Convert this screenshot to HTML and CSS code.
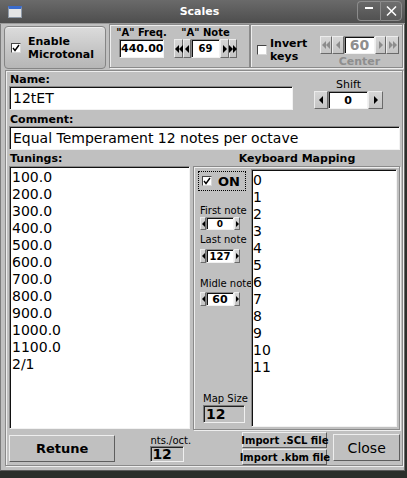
FILE: index.html
```html
<!DOCTYPE html>
<html lang="en">
<head>
<meta charset="utf-8">
<title>Scales</title>
<link rel="stylesheet" href="styles.css">
</head>
<body>
<div class="win">
  <header class="titlebar">
    <div class="tb-left"><span class="appicon"></span></div>
    <div class="title">Scales</div>
    <div class="tb-right">
      <span class="wbtn wmin"><span class="minline"></span></span>
      <span class="wbtn wclose"><svg width="11" height="10" viewBox="0 0 11 10"><path d="M1 0.5 L10 9.5 M10 0.5 L1 9.5" stroke="#fff" stroke-width="1.5" fill="none"/></svg></span>
    </div>
  </header>
  <div class="client">
    <div class="toprow">
      <div class="microbtn">
        <span class="cb"><svg width="8" height="8" viewBox="0 0 8 8"><path d="M1 4 L3 6.5 L7 1" stroke="#000" stroke-width="1.4" fill="none"/></svg></span>
        <span class="mlabel">Enable<br>Microtonal</span>
      </div>
      <div class="grp g1">
        <div class="fcol freq">
          <div class="glabel">"A" Freq.</div>
          <div class="inp freqinp">440.000</div>
        </div>
        <div class="fcol note">
          <div class="glabel">"A" Note</div>
          <div class="counter c-note">
            <span class="cbtn b9"><i class="tl"></i><i class="tl"></i></span>
            <span class="cbtn b8"><i class="tl"></i></span>
            <span class="cval v-note">69</span>
            <span class="cbtn b9"><i class="tr"></i></span>
            <span class="cbtn b8"><i class="tr"></i><i class="tr"></i></span>
          </div>
        </div>
      </div>
      <div class="grp g2">
        <span class="cb cb-inv"></span>
        <div class="invlbl">Invert<br>keys</div>
        <div class="centercol">
          <div class="counter c-center disabled">
            <span class="cbtn b12"><i class="tl"></i><i class="tl"></i></span>
            <span class="cbtn b12"><i class="tl"></i></span>
            <span class="cval v-center">60</span>
            <span class="cbtn b11"><i class="tr"></i></span>
            <span class="cbtn b13"><i class="tr"></i><i class="tr"></i></span>
          </div>
          <div class="centerlbl">Center</div>
        </div>
      </div>
    </div>

    <div class="main">
      <div class="row1">
        <div class="namecol">
          <div class="lbl">Name:</div>
          <div class="inp textinp">12tET</div>
        </div>
        <div class="shiftcol">
          <div class="shiftlbl">Shift</div>
          <div class="counter c-shift">
            <span class="cbtn b14"><i class="tl"></i></span>
            <span class="cval v-shift">0</span>
            <span class="cbtn b15"><i class="tr"></i></span>
          </div>
        </div>
      </div>
      <div class="lbl commentlbl">Comment:</div>
      <div class="inp textinp">Equal Temperament 12 notes per octave</div>

      <div class="labels">
        <div class="lbl tunlbl">Tunings:</div>
        <div class="lbl kmlbl">Keyboard Mapping</div>
      </div>

      <div class="content">
        <div class="inp list tunings">100.0<br>200.0<br>300.0<br>400.0<br>500.0<br>600.0<br>700.0<br>800.0<br>900.0<br>1000.0<br>1100.0<br>2/1</div>
        <div class="grp kmap">
          <div class="kleft">
            <div class="onbox">
              <span class="cb"><svg width="8" height="8" viewBox="0 0 8 8"><path d="M1 4 L3 6.5 L7 1" stroke="#000" stroke-width="1.4" fill="none"/></svg></span>
              <span class="ontext">ON</span>
            </div>
            <div class="smlbl fn">First note</div>
            <div class="counter sm c-first">
              <span class="cbtn b6"><i class="tl"></i></span>
              <span class="cval v-first">0</span>
              <span class="cbtn b6"><i class="tr"></i></span>
            </div>
            <div class="smlbl ln">Last note</div>
            <div class="counter sm c-last">
              <span class="cbtn b6"><i class="tl"></i></span>
              <span class="cval v-last">127</span>
              <span class="cbtn b6"><i class="tr"></i></span>
            </div>
            <div class="smlbl mn">Midle note</div>
            <div class="counter sm c-mid">
              <span class="cbtn b6"><i class="tl"></i></span>
              <span class="cval v-mid">60</span>
              <span class="cbtn b6"><i class="tr"></i></span>
            </div>
            <div class="smlbl msl">Map Size</div>
            <div class="graybox msbox">12</div>
          </div>
          <div class="inp list kmaplist">0<br>1<br>2<br>3<br>4<br>5<br>6<br>7<br>8<br>9<br>10<br>11</div>
        </div>
      </div>

      <div class="bottom">
        <div class="btn retune">Retune</div>
        <div class="ntscol">
          <div class="ntslbl">nts./oct.</div>
          <div class="graybox ntsbox">12</div>
        </div>
        <div class="importcol">
          <div class="btn ibtn">Import .SCL file</div>
          <div class="btn ibtn">Import .kbm file</div>
        </div>
        <div class="btn closebtn">Close</div>
      </div>
    </div>
  </div>
</div>
</body>
</html>
```

FILE: styles.css
```css
* { box-sizing: border-box; margin: 0; padding: 0; }
html, body { width: 407px; height: 478px; overflow: hidden; }
body {
  background: #2b2f2b;
  font-family: "DejaVu Sans", "Liberation Sans", sans-serif;
  font-size: 11px;
  color: #000;
}
i { display: block; }

.win {
  width: 405px;
  height: 471px;
  display: flex;
  flex-direction: column;
}

/* title bar */
.titlebar {
  height: 24px;
  flex: none;
  display: grid;
  grid-template-columns: 1fr auto 1fr;
  align-items: center;
  background: linear-gradient(#6a6a6a, #4e4e4e);
  border-bottom: 1px solid #9a9a9a;
}
.tb-left { padding-left: 8px; display: flex; }
.appicon {
  width: 14px;
  height: 12px;
  background: #e4e4e4;
  border: 1px solid #8f9aa8;
  border-top: 3px solid #3a6bcc;
}
.title {
  color: #fff;
  font-weight: bold;
  font-size: 11px;
  padding-right: 6px;
}
.tb-right {
  justify-self: end;
  align-self: start;
  display: flex;
  margin-top: 1px;
  margin-right: 3px;
}
.wbtn {
  height: 20px;
  border: 1px solid #8c8c8c;
  display: flex;
  justify-content: center;
}
.wmin { width: 23px; border-radius: 4px 0 0 4px; border-right: none; }
.minline { width: 8px; height: 2px; background: #fff; margin-top: 5px; }
.wclose { width: 22px; border-radius: 0 4px 4px 0; align-items: center; background: rgba(255,255,255,0.05); }

/* client */
.client {
  flex: 1;
  background: #c0c0c0;
  border-left: 1px solid #7c7c7c;
  border-right: 1px solid #6a6a6a;
  border-bottom: 1px solid #5c5c5c;
  display: flex;
  flex-direction: column;
}

.toprow {
  display: flex;
  align-items: flex-start;
  height: 45px;
  flex: none;
}
.microbtn {
  margin: 2px 0 0 3px;
  width: 102px;
  height: 43px;
  border: 1px solid #858585;
  border-radius: 4px;
  background: linear-gradient(#dcdcdc, #c8c8c8 50%, #b6b6b6);
  box-shadow: inset 0 1px 0 #efefef;
  display: flex;
  align-items: center;
}
.cb {
  width: 10px;
  height: 10px;
  flex: none;
  background: #fff;
  border: 1px solid;
  border-color: #444 #d6d6d6 #d6d6d6 #444;
  display: flex;
  align-items: center;
  justify-content: center;
}
.microbtn .cb { margin-left: 6px; }
.mlabel { margin-left: 7px; font-weight: bold; font-size: 11px; line-height: 13px; }

.grp {
  border: 1px solid #8a8a8a;
  box-shadow: inset 1px 1px 0 #eeeeee, 1px 1px 0 #eeeeee;
}
.g1 {
  margin-left: 3px;
  width: 141px;
  height: 44px;
  display: flex;
  padding-top: 2px;
}
.fcol { display: flex; flex-direction: column; align-items: center; }
.freq { margin-left: 6px; width: 51px; }
.note { margin-left: 7px; width: 63px; }
.glabel { font-weight: bold; font-size: 10px; line-height: 12px; white-space: nowrap; }

.inp {
  background: #fff;
  border: 1px solid;
  border-color: #8a8a8a #f2f2f2 #f2f2f2 #8a8a8a;
  box-shadow: inset 1px 1px 0 #111;
}
.freqinp {
  width: 45px;
  height: 19px;
  font-weight: bold;
  font-size: 11px;
  line-height: 17px;
  padding-left: 1px;
  overflow: hidden;
  white-space: nowrap;
}

/* counters */
.counter { display: flex; }
.cbtn {
  height: 100%;
  background: linear-gradient(#d6d6d6, #c4c4c4);
  border: 1px solid;
  border-color: #ececec #6a6a6a #6a6a6a #ececec;
  display: flex;
  align-items: center;
  justify-content: center;
}
.tl, .tr { width: 0; height: 0; border-style: solid; }
.tl { border-width: 4px 4px 4px 0; border-color: transparent #000 transparent transparent; }
.tr { border-width: 4px 0 4px 4px; border-color: transparent transparent transparent #000; }
.sm .tl { border-width: 3px 3px 3px 0; }
.sm .tr { border-width: 3px 0 3px 3px; }
.disabled .tl { border-right-color: #8c8c8c; }
.disabled .tr { border-left-color: #8c8c8c; }
.cval {
  height: 100%;
  background: #fff;
  border: 1px solid;
  border-color: #8a8a8a #f2f2f2 #f2f2f2 #8a8a8a;
  box-shadow: inset 1px 1px 0 #111;
  display: flex;
  align-items: center;
  justify-content: center;
  font-weight: bold;
}
.b6 { width: 6px; }
.b8 { width: 8px; }
.b9 { width: 9px; }
.b11 { width: 11px; }
.b12 { width: 12px; }
.b13 { width: 13px; }
.b14 { width: 14px; }
.b15 { width: 15px; }

.c-note { height: 19px; }
.v-note { width: 29px; font-size: 10px; }

.g2 {
  width: 153px;
  height: 44px;
  display: flex;
  align-items: flex-start;
}
.cb-inv { margin: 20px 0 0 6px; }
.invlbl { margin: 12px 0 0 3px; width: 46px; font-weight: bold; font-size: 11px; line-height: 13px; }
.centercol { margin: 11px 0 0 4px; display: flex; flex-direction: column; align-items: center; }
.c-center { height: 18px; }
.v-center { width: 31px; font-size: 14px; color: #8e8e8e; }
.centerlbl { font-weight: bold; font-size: 11px; line-height: 13px; color: #8e8e8e; margin-top: 1px; }

/* main frame */
.main {
  margin: 1px 0 0 4px;
  width: 398px;
  border: 1px solid #8a8a8a;
  box-shadow: inset 1px 1px 0 #eeeeee, 1px 1px 0 #eeeeee;
  padding: 2px 2px 0 3px;
  display: flex;
  flex-direction: column;
}
.lbl { font-weight: bold; font-size: 11px; line-height: 13px; padding-left: 1px; }
.row1 { display: flex; height: 37px; }
.namecol { width: 284px; }
.textinp {
  height: 24px;
  font-size: 14px;
  line-height: 22px;
  padding-left: 3px;
  white-space: nowrap;
}
.shiftcol {
  margin: 5px 0 0 21px;
  width: 69px;
  display: flex;
  flex-direction: column;
  align-items: center;
}
.shiftlbl { font-size: 11px; line-height: 13px; }
.c-shift { height: 18px; }
.v-shift { width: 40px; font-size: 11px; }

.commentlbl { margin-top: 3px; }

.labels { display: flex; margin-top: 2px; height: 14px; }
.tunlbl { width: 184px; line-height: 14px; }
.kmlbl { width: 207px; text-align: center; line-height: 14px; }

.content { display: flex; height: 264px; }
.list {
  font-size: 14px;
  line-height: 17px;
  padding: 2px 2px;
}
.tunings { width: 181px; height: 263px; }
.kmap {
  margin-left: 3px;
  width: 207px;
  height: 264px;
  display: flex;
}
.kleft {
  width: 57px;
  height: 262px;
  display: flex;
  flex-direction: column;
  align-items: flex-start;
}
.kmaplist { margin-top: 2px; width: 146px; height: 258px; padding-left: 1px; }

.onbox {
  margin: 4px 0 0 4px;
  width: 48px;
  height: 20px;
  border: 1px dotted #000;
  display: flex;
  align-items: center;
}
.onbox .cb { margin-left: 3px; }
.ontext { margin-left: 6px; font-weight: bold; font-size: 13px; }
.smlbl { font-size: 10px; line-height: 12px; margin-left: 6px; white-space: nowrap; }
.fn { margin-top: 14px; }
.ln { margin-top: 4px; }
.mn { margin-top: 15px; }
.sm { margin-left: 6px; }
.c-first { height: 13px; }
.c-last { height: 14px; margin-top: 3px; }
.c-mid { height: 14px; margin-top: 2px; }
.v-first { width: 28px; font-size: 9px; }
.v-last { width: 28px; font-size: 10px; }
.v-mid { width: 28px; font-size: 11px; }
.msl { margin-top: auto; margin-left: 9px; }

.graybox {
  background: #c0c0c0;
  border: 1px solid;
  border-color: #7a7a7a #f0f0f0 #f0f0f0 #7a7a7a;
  box-shadow: inset 1px 1px 0 #222;
  font-weight: bold;
  font-size: 14px;
  padding-left: 2px;
}
.msbox { margin: 0 0 6px 9px; width: 42px; height: 18px; line-height: 16px; }

/* bottom row */
.bottom { display: flex; align-items: flex-start; height: 35px; }
.btn {
  background: #c0c0c0;
  border: 1px solid;
  border-color: #eeeeee #5e5e5e #5e5e5e #eeeeee;
  display: flex;
  align-items: center;
  justify-content: center;
  white-space: nowrap;
}
.retune { margin-top: 5px; width: 107px; height: 27px; font-weight: bold; font-size: 13px; }
.ntscol { margin: 5px 0 0 35px; width: 40px; }
.ntslbl { font-size: 10px; line-height: 11px; }
.ntsbox { width: 34px; height: 16px; line-height: 14px; padding-left: 1px; }
.importcol { margin: 2px 0 0 52px; width: 85px; }
.ibtn { height: 16px; font-weight: bold; font-size: 10px; }
.ibtn + .ibtn { margin-top: 1px; }
.closebtn { margin: 4px 0 0 6px; width: 67px; height: 27px; font-size: 14px; }
```
